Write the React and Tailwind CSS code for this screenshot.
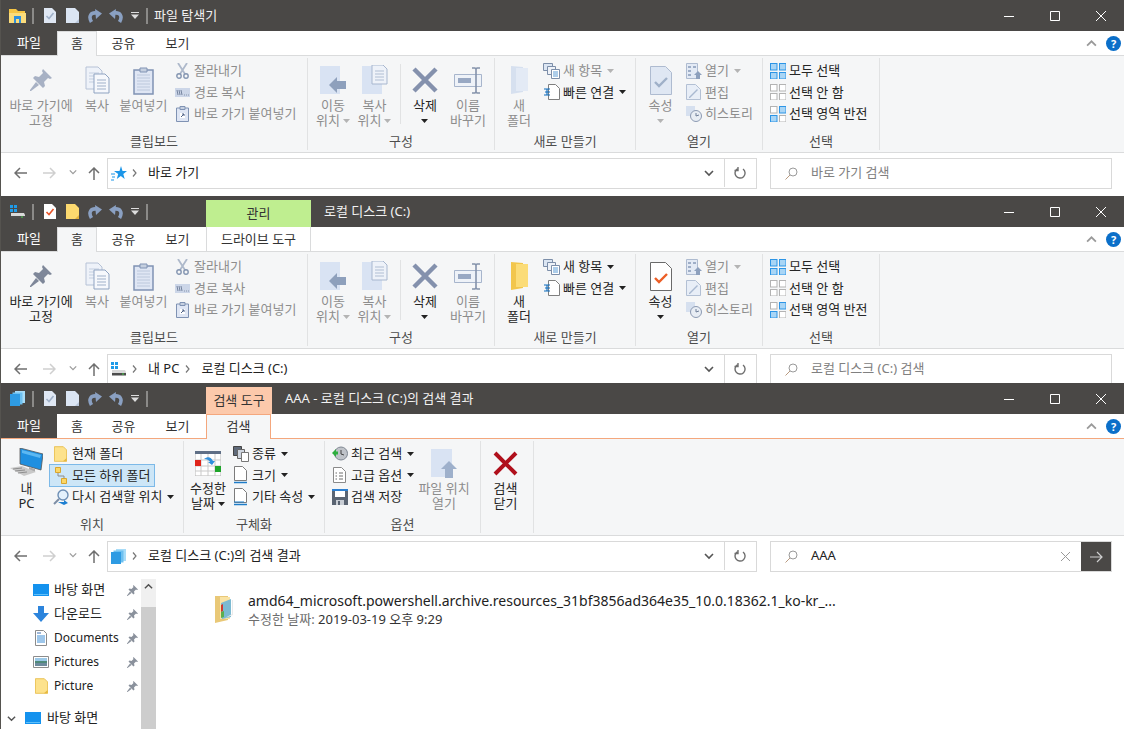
import React from 'react';

const DARK = 'bg-[#4a4846]';

/* ---------- small glyph icons ---------- */
const Caret = ({ dim }) => (
  <svg width="7" height="4" viewBox="0 0 7 4" className="shrink-0">
    <path d="M0 0h7L3.5 4z" fill={dim ? '#b4b4b4' : '#222'} />
  </svg>
);

const Chevron = ({ up, size = 9, color = '#6d6d6d' }) => (
  <svg width={size} height={size} viewBox="0 0 10 10" className="shrink-0">
    <path d={up ? 'M1 7l4-4 4 4' : 'M1 3l4 4 4-4'} fill="none" stroke={color} strokeWidth="1.6" />
  </svg>
);

const Sep = () => <div className="w-[2px] h-[16px] border-x border-[#8b8a88] bg-[#5a5856]" />;

/* ---------- quick access toolbar ---------- */
const QatCheck = ({ on }) => (
  <svg width="12" height="15" viewBox="0 0 12 15">
    <path d="M0 0h8l4 4v11H0z" fill={on ? '#fff' : '#dfe7f3'} />
    <path d="M2.5 8l2.5 2.5L9.5 5" fill="none" stroke={on ? '#e8562a' : '#9fb0c8'} strokeWidth="1.6" />
  </svg>
);
const QatPage = ({ on }) => (
  <svg width="13" height="15" viewBox="0 0 13 15">
    <path d="M0 0h9l4 4v11H0z" fill={on ? '#fcd96f' : '#dbe5f3'} />
    <path d="M9 15l4-4v4z" fill={on ? '#e3b23c' : '#b8c6da'} />
  </svg>
);
const QatUndo = ({ flip }) => (
  <svg width="14" height="14" viewBox="0 0 14 14" className={flip ? '-scale-x-100' : ''}>
    <path d="M3.500 13C0 7 3 3 9 4" fill="none" stroke="#8aa0c2" strokeWidth="3.600" />
    <path d="M7 0l7 4.500L8 10z" fill="#8aa0c2" />
  </svg>
);
const QatMore = () => (
  <svg width="8" height="7" viewBox="0 0 8 7">
    <path d="M0 0h8v1H0z" fill="#ddd" />
    <path d="M0 2.5h8L4 7z" fill="#ddd" />
  </svg>
);

/* ---------- app icons ---------- */
const ExplorerIcon = () => (
  <svg width="17" height="14" viewBox="0 0 17 14">
    <path d="M0 0h7l2 2h7v12H0z" fill="#f6c544" />
    <path d="M0 4h17v10H0z" fill="#fbdc7b" />
    <path d="M5 7h7v7H5z" fill="#2f8fdc" />
    <path d="M7 10h3v4H7z" fill="#fbdc7b" />
  </svg>
);
const DriveIcon = ({ w = 16 }) => (
  <svg width={w} height="14" viewBox="0 0 16 14">
    <path d="M0 0h3v3H0zM4 0h3v3H4zM0 4h3v3H0zM4 4h3v3H4z" fill="#1e9be8" />
    <path d="M1 8h13l1 2v3H1z" fill="#d9d9d9" />
    <path d="M1 11h14v2.500H1z" fill="#4d4d4d" />
    <path d="M11 11.500h2v1h-2z" fill="#49d14b" />
  </svg>
);
const SearchAppIcon = ({ w = 15 }) => (
  <svg width={w} height="15" viewBox="0 0 15 15">
    <path d="M5 0h10v12H5z" fill="#a7dcf8" />
    <path d="M2.500 1.500h10v12h-10z" fill="#6dc0f0" />
    <path d="M0 3h10v12H0z" fill="#2e9be3" />
  </svg>
);
const StarIcon = () => (
  <svg width="16" height="15" viewBox="0 0 16 15">
    <path d="M10 0l1.500 5H16l-3.700 3 1.400 5-3.900-3-4 3 1.400-5L3 5h5.500z" fill="#1c96e8" />
    <path d="M0 8h4M1 11h3M0 14h3" stroke="#1c96e8" strokeWidth="1.100" />
  </svg>
);

/* ---------- ribbon icons, home tab ---------- */
const PinIcon = ({ dim }) => (
  <svg width="22" height="22" viewBox="0 0 22 22">
    <g fill={dim ? '#a7b1c4' : '#7e8799'}>
      <path d="M13 0l9 9-2 1-2-1-4 4 1 4-2 2-10-10 2-2 4 1 4-4-1-2z" />
      <path d="M6 13l3 3-8 6-1 0 0-1z" />
    </g>
  </svg>
);
const Pages = ({ big }) => (
  <svg width={big ? 25 : 15} height={big ? 28 : 15} viewBox="0 0 25 28">
    <path d="M1 1h12l4 4v18H1z" fill="#eef2f9" stroke="#b6c2d6" />
    <path d="M4 7h10M4 10h10M4 13h10M4 16h10" stroke="#c4cfe0" />
    <path d="M9 8h11l4 4v15H9z" fill="#f6f8fc" stroke="#8fa3c1" />
    <path d="M12 14h9M12 17h9M12 20h9M12 23h9" stroke="#9fb0c9" />
  </svg>
);
const PasteIcon = () => (
  <svg width="21" height="29" viewBox="0 0 21 29">
    <path d="M1 4h19v24H1z" fill="#dfe6f4" stroke="#8093b4" strokeWidth="1.500" />
    <path d="M7 2h7v4H7z" fill="#c6d0e0" stroke="#8093b4" />
    <path d="M4 9h13M4 12h13M4 15h13M4 18h13M4 21h13M4 24h13" stroke="#bcc8dc" />
  </svg>
);
const CutIcon = () => (
  <svg width="13" height="16" viewBox="0 0 13 16">
    <path d="M2 0l7 11M11 0L4 11" stroke="#aeb9cb" strokeWidth="1.800" fill="none" />
    <circle cx="3" cy="13" r="2.200" fill="none" stroke="#8495b1" strokeWidth="1.400" />
    <circle cx="10" cy="13" r="2.200" fill="none" stroke="#8495b1" strokeWidth="1.400" />
  </svg>
);
const PathIcon = () => (
  <svg width="15" height="9" viewBox="0 0 15 9">
    <path d="M0 0h15v9H0z" fill="#ccd6e8" />
    <path d="M2 2l1 5M4 2l1 5M6 2l1 5M9 7h.8M11 7h.8M13 7h.8" stroke="#5e6f8c" strokeWidth=".8" />
  </svg>
);
const PasteLinkIcon = () => (
  <svg width="13" height="16" viewBox="0 0 13 16">
    <path d="M.5 2h12v13.500H.5z" fill="#dfe6f4" stroke="#7f92b3" />
    <path d="M4 .5h5v3H4z" fill="#c6d0e0" stroke="#7f92b3" />
    <path d="M4 7h5v5H4z" fill="#fff" />
    <path d="M5 11l3-3M6 8h2v2" stroke="#4e6288" fill="none" />
  </svg>
);
const MoveIcon = ({ copy }) => (
  <svg width="26" height="30" viewBox="0 0 26 30">
    <path d="M0 1h20v28H0z" fill="#d9e3f3" />
    {copy ? (
      <g>
        <path d="M10 0h11l4 4v15H10z" fill="#eef2f9" stroke="#a8b7cf" />
        <path d="M13 6h9M13 9h9M13 12h9M13 15h9" stroke="#b0bed3" />
      </g>
    ) : (
      <path d="M9 20l8-8v4h9v8h-9v4z" fill="#8ea0bc" />
    )}
  </svg>
);
const DeleteIcon = () => (
  <svg width="26" height="26" viewBox="0 0 26 26">
    <path d="M2 2l22 22M24 2L2 24" stroke="#8491ad" strokeWidth="4.500" />
  </svg>
);
const RenameIcon = () => (
  <svg width="29" height="27" viewBox="0 0 29 27">
    <path d="M.5 7.500h27v12H.5z" fill="#eef2f8" stroke="#a7b5cc" />
    <path d="M4 11h13v5H4z" fill="#98a8c3" />
    <path d="M18 1h3l1 1 1-1h3M18 26h3l1-1 1 1h3M22 2v23" stroke="#8492ab" strokeWidth="1.600" fill="none" />
  </svg>
);
const NewFolderIcon = ({ dim }) => (
  <svg width="19" height="28" viewBox="0 0 19 28">
    <path d="M1 0l12 1v25L1 28z" fill={dim ? '#d6e0ef' : '#f2c64d'} />
    <path d="M6 2h12v23H6z" fill={dim ? '#e3eaf5' : '#fbdc78'} />
  </svg>
);
const NewItemIcon = () => (
  <svg width="17" height="16" viewBox="0 0 17 16">
    <path d="M.5.500h9v7h-9z" fill="#dce6f3" stroke="#7c8ea9" />
    <path d="M4.500 3.500h8v8h-8z" fill="#eef2f8" stroke="#7c8ea9" />
    <path d="M8.500 6.500h8v9h-8z" fill="#fff" stroke="#7c8ea9" />
    <path d="M10 9h5M10 11h5M10 13h5" stroke="#5a9bd5" />
  </svg>
);
const QuickIcon = () => (
  <svg width="16" height="16" viewBox="0 0 16 16">
    <path d="M4.500.500h7l4 4v11h-11z" fill="#fff" stroke="#7f7f7f" />
    <path d="M0 5h6M1 8h5M0 11h6M3 5v6" stroke="#0f6cbd" strokeWidth="1.100" fill="none" />
  </svg>
);
const PropsIcon = ({ dim }) => (
  <svg width="22" height="29" viewBox="0 0 22 29">
    <path d="M.5.500h15l6 6v22H.5z" fill={dim ? '#dfe7f3' : '#fff'} stroke={dim ? '#aebbd0' : '#6a6a6a'} />
    <path d="M5 16l4 4 8-8" fill="none" stroke={dim ? '#9fb0c8' : '#ec5e26'} strokeWidth="2.400" />
  </svg>
);
const OpenIcon = () => (
  <svg width="16" height="16" viewBox="0 0 16 16">
    <path d="M.5.500h11v15H.5z" fill="#e3eaf5" stroke="#aebbd0" />
    <path d="M2 3h3v2H2zM2 7h3v2H2zM2 11h3v2H2zM7 3h3v2H7z" fill="#9eaec7" />
    <path d="M8 12l4-4 4 4h-2v4h-4v-4z" fill="#8da0bd" />
  </svg>
);
const EditIcon = () => (
  <svg width="15" height="16" viewBox="0 0 15 16">
    <path d="M.5.500h9l5 5v10H.5z" fill="#e8eef7" stroke="#b3c0d4" />
    <path d="M3 13l8-8 1 1-8 8H3z" fill="#a9b9d1" />
  </svg>
);
const ClockIcon = ({ w = 16 }) => (
  <svg width={w} height="16" viewBox="0 0 16 16">
    <path d="M0 0h9v10H0z" fill="#d6e0ef" />
    <circle cx="10" cy="10" r="5.500" fill="#e8edf4" stroke="#8c9ab2" />
    <path d="M10 7v3l3-1" stroke="#6f7f99" fill="none" />
  </svg>
);
const SelIcon = ({ on }) => {
  const cells = [[0, 0], [9, 0], [0, 9], [9, 9]];
  return (
    <svg width="16" height="16" viewBox="0 0 16 16">
      {cells.map(([x, y], i) => (
        <rect key={i} x={x + 0.5} y={y + 0.5} width="6.500" height="6.500"
          fill={on[i] ? '#a9d5f5' : '#fff'} stroke={on[i] ? '#2d95e6' : '#b3b3b3'} />
      ))}
    </svg>
  );
};

/* ---------- ribbon icons, search tab ---------- */
const PcIcon = () => (
  <svg width="33" height="30" viewBox="0 0 33 30">
    <path d="M10 0l23 6-2 16-21-6z" fill="#1e8fe0" stroke="#555" strokeWidth=".8" />
    <path d="M12 2l19 5-1 3-18-5z" fill="#5cb8f2" />
    <path d="M19 19l6 2v3l-6-2z" fill="#aaa" />
    <path d="M0 20l12-2 14 6-12 4z" fill="#c9c9c9" />
    <path d="M3 21l9-1M5 23l10-1M8 25l9-1" stroke="#8e8e8e" />
  </svg>
);
const FolderFlat = ({ w = 16, h = 19 }) => (
  <svg width={w} height={h} viewBox="0 0 16 19">
    <path d="M.5.500h11l4 4v14H.5z" fill="#fde28c" stroke="#e6b93f" />
    <path d="M11 18.500l4.500-4v4z" fill="#e6b93f" />
  </svg>
);
const SubFoldersIcon = () => (
  <svg width="12" height="17" viewBox="0 0 12 17">
    <path d="M.5.500h5v5h-5zM6.500 11.500h5v5h-5z" fill="#fbd666" stroke="#d9a62e" />
    <path d="M3 6v3h6v2" fill="none" stroke="#8b8b8b" />
  </svg>
);
const ResearchIcon = () => (
  <svg width="16" height="16" viewBox="0 0 16 16">
    <circle cx="10" cy="6" r="5" fill="#e4f1fc" stroke="#6e8fb5" strokeWidth="1.400" />
    <path d="M6 10l-5 5" stroke="#7d8ea6" strokeWidth="2" />
    <path d="M5 13h6v-2l4 3-4 2z" fill="#1d7fd1" />
  </svg>
);
const CalendarIcon = () => (
  <svg width="26" height="25" viewBox="0 0 26 25">
    <path d="M0 0h26v25H0z" fill="#fff" stroke="#b5b5b5" />
    <path d="M0 0h26v3H0z" fill="#5f6f86" />
    <path d="M0 9h26M0 15h26M0 20h26M6 3v22M13 3v22M20 3v22" stroke="#c9c9c9" />
    <path d="M0 9h6v6H0z" fill="#e0251c" />
    <path d="M20 15h6v6h-6z" fill="#1ea52a" />
    <path d="M9 8c4-3 7-2 9 2h2l-3 4-4-3h2c-1-2-3-3-6-3z" fill="#2f8fdc" />
  </svg>
);
const KindIcon = () => (
  <svg width="16" height="16" viewBox="0 0 16 16">
    <path d="M.5.500h8v9h-8z" fill="#5f6a7a" stroke="#444" />
    <path d="M4.500 3.500h7v9h-7z" fill="#cfd6e0" stroke="#666" />
    <path d="M8.500 6.500h7v9h-7z" fill="#fff" stroke="#777" />
  </svg>
);
const SizeIcon = ({ lines }) => (
  <svg width="13" height="18" viewBox="0 0 13 18">
    <path d="M.5.500h8l4 4v10H.5z" fill="#fff" stroke="#7c7c7c" />
    <path d="M0 16.500h13" stroke="#1e7cc8" strokeWidth="1.500" />
    {lines && <path d="M0 14h10" stroke="#1e7cc8" />}
  </svg>
);
const RecentIcon = () => (
  <svg width="16" height="15" viewBox="0 0 16 15">
    <circle cx="9" cy="7.500" r="6.500" fill="#bfc3c9" stroke="#7f8792" />
    <path d="M9 4v4l3 1" stroke="#444" fill="none" />
    <path d="M0 7l4-4v2.500h2v3H4V11z" fill="#2eae3f" />
  </svg>
);
const AdvancedIcon = () => (
  <svg width="13" height="16" viewBox="0 0 13 16">
    <path d="M.5.500h8l4 4v11H.5z" fill="#fff" stroke="#8a8a8a" />
    <path d="M2.500 6h1.500M2.500 9h1.500M2.500 12h1.500M6 6h4M6 9h4M6 12h4" stroke="#6d6d6d" />
  </svg>
);
const SaveIcon = () => (
  <svg width="16" height="16" viewBox="0 0 16 16">
    <path d="M0 0h16v16H0z" fill="#5a6472" />
    <path d="M0 0h16v2H0z" fill="#2c7fd0" />
    <path d="M3 2h10v6H3z" fill="#fff" />
    <path d="M4 11h8v5H4z" fill="#c9ced5" />
    <path d="M6 12h2v4H6z" fill="#5a6472" />
  </svg>
);
const OpenLocationIcon = () => (
  <svg width="26" height="29" viewBox="0 0 26 29">
    <path d="M0 0h21v28H0z" fill="#d9e3f3" />
    <path d="M10 20l8-8 8 8h-4v9h-8v-9z" fill="#9eb0cb" />
  </svg>
);
const CloseSearchIcon = () => (
  <svg width="25" height="25" viewBox="0 0 25 25">
    <path d="M2 2l21 21M23 2L2 23" stroke="#b0101c" strokeWidth="4" />
  </svg>
);

/* ---------- nav pane icons ---------- */
const DesktopIcon = () => (
  <svg width="16" height="12" viewBox="0 0 16 12">
    <path d="M0 0h16v12H0z" fill="#1492ee" />
    <path d="M1 10.500h14" stroke="#5fc0fa" />
  </svg>
);
const DownloadIcon = () => (
  <svg width="16" height="16" viewBox="0 0 16 16">
    <path d="M5 0h6v7h5l-8 9-8-9h5z" fill="#2c84dc" />
  </svg>
);
const DocsIcon = () => (
  <svg width="12" height="16" viewBox="0 0 12 16">
    <path d="M.5.500h8l3 3v12H.5z" fill="#fff" stroke="#8c8c8c" />
    <path d="M2 6h8M2 8h8M2 10h8M2 12h8" stroke="#3d8ed6" />
    <path d="M2 3h4" stroke="#3d6fb0" />
  </svg>
);
const PicturesIcon = () => (
  <svg width="16" height="12" viewBox="0 0 16 12">
    <path d="M.5.500h15v11H.5z" fill="#fff" stroke="#8c8c8c" />
    <path d="M2 2h12v3H2z" fill="#9cc9e8" />
    <path d="M2 5h12v2H2z" fill="#4f8a7a" />
    <path d="M2 7h12v3H2z" fill="#6d8a9c" />
  </svg>
);
const SmallPin = () => (
  <svg width="11" height="11" viewBox="0 0 22 22">
    <path d="M13 0l9 9-2 1-2-1-4 4 1 4-2 2-10-10 2-2 4 1 4-4-1-2zM6 13l3 3-8 6-1 0 0-1z" fill="#8a919c" />
  </svg>
);
const ArchiveFolderIcon = () => (
  <svg width="20" height="28" viewBox="0 0 20 28">
    <path d="M1 1l13 0v24L1 28z" fill="#e9c877" />
    <path d="M6 2h10v22H6z" fill="#fae3a3" />
    <path d="M7 8l10-4v18L8 24z" fill="#7cbad2" />
    <path d="M7 10l2-1v7l-2 1z" fill="#cf3a2f" />
    <path d="M7 17l3-1v6l-3 1z" fill="#5cae4f" />
    <path d="M11 23l8-3V5l-1 0v14z" fill="#eaeaea" />
  </svg>
);

/* ---------- ribbon building blocks ---------- */
function LargeButton({ className, icon, lines, caret, dim }) {
  return (
    <div className={`flex flex-col items-center pt-[6px] shrink-0 ${className}`}>
      <div className="h-[36px] flex items-center justify-center">{icon}</div>
      <div className={`flex flex-col items-center text-[13px] leading-[15px] whitespace-nowrap ${dim ? 'text-[#8d8d8d]' : 'text-[#262626]'}`}>
        {lines.map((line, i) => (
          <span key={i} className="h-[15px] flex items-center gap-[3px]">
            {line}
            {caret === true && i === lines.length - 1 && <Caret dim={dim} />}
          </span>
        ))}
        {caret === 'below' && <span className="h-[15px] flex items-center"><Caret dim={dim} /></span>}
      </div>
    </div>
  );
}

function SmallRow({ icon, label, caret, dim, selected }) {
  return (
    <div className={`h-[21.5px] flex items-center whitespace-nowrap text-[13px] ${dim ? 'text-[#8d8d8d]' : 'text-[#262626]'} ${selected ? '-ml-[2px] pl-[2px] pr-[3px] self-start bg-[#cde6f7] outline outline-[#7cb9e8]' : ''}`}>
      <div className="w-[17px] flex justify-center shrink-0">{icon}</div>
      <span className="ml-[3px]">{label}</span>
      {caret && <span className="ml-[5px]"><Caret dim={dim} /></span>}
    </div>
  );
}

const SmallCol = ({ className = '', children }) => (
  <div className={`flex flex-col pt-[4px] shrink-0 ${className}`}>{children}</div>
);

function Group({ className, label, children }) {
  return (
    <div className={`flex flex-col my-[2px] border-r border-[#e1e2e3] shrink-0 ${className}`}>
      <div className="h-[73px] -mt-[2px] flex">{children}</div>
      <div className="mt-[4px] h-[16px] leading-[16px] text-center text-[13px] text-[#4d4d4d]">{label}</div>
    </div>
  );
}

const Ribbon = ({ children }) => (
  <div className="h-[97px] flex bg-[#f5f6f7] border-b border-[#dadbdc] shrink-0">{children}</div>
);

function HomeRibbon({ active }) {
  return (
    <Ribbon>
      <Group className="w-[307px]" label="클립보드">
        <LargeButton className="w-[80px]" icon={<PinIcon dim={!active} />} lines={['바로 가기에', '고정']} dim={!active} />
        <LargeButton className="w-[32px]" icon={<Pages big />} lines={['복사']} dim />
        <LargeButton className="w-[61px]" icon={<PasteIcon />} lines={['붙여넣기']} dim />
        <SmallCol>
          <SmallRow icon={<CutIcon />} label="잘라내기" dim />
          <SmallRow icon={<PathIcon />} label="경로 복사" dim />
          <SmallRow icon={<PasteLinkIcon />} label="바로 가기 붙여넣기" dim />
        </SmallCol>
      </Group>
      <Group className="w-[187px]" label="구성">
        <LargeButton className="w-[50px]" icon={<MoveIcon />} lines={['이동', '위치']} caret dim />
        <LargeButton className="w-[33px]" icon={<MoveIcon copy />} lines={['복사', '위치']} caret dim />
        <div className="w-px h-[60px] mt-[8px] bg-[#e1e2e3] ml-[9px] shrink-0" />
        <LargeButton className="w-[48px]" icon={<DeleteIcon />} lines={['삭제']} caret="below" />
        <LargeButton className="w-[38px]" icon={<RenameIcon />} lines={['이름', '바꾸기']} dim />
      </Group>
      <Group className="w-[141px]" label="새로 만들기">
        <LargeButton className="w-[48px]" icon={<NewFolderIcon dim={!active} />} lines={['새', '폴더']} dim={!active} />
        <SmallCol>
          <SmallRow icon={<NewItemIcon />} label="새 항목" caret dim={!active} />
          <SmallRow icon={<QuickIcon />} label="빠른 연결" caret />
        </SmallCol>
      </Group>
      <Group className="w-[127px]" label="열기">
        <LargeButton className="w-[49px]" icon={<PropsIcon dim={!active} />} lines={['속성']} caret="below" dim={!active} />
        <SmallCol>
          <SmallRow icon={<OpenIcon />} label="열기" caret dim />
          <SmallRow icon={<EditIcon />} label="편집" dim />
          <SmallRow icon={<ClockIcon />} label="히스토리" dim />
        </SmallCol>
      </Group>
      <Group className="w-[117px]" label="선택">
        <SmallCol className="ml-[6px]">
          <SmallRow icon={<SelIcon on={[1, 1, 1, 1]} />} label="모두 선택" />
          <SmallRow icon={<SelIcon on={[0, 0, 0, 0]} />} label="선택 안 함" />
          <SmallRow icon={<SelIcon on={[0, 1, 1, 0]} />} label="선택 영역 반전" />
        </SmallCol>
      </Group>
    </Ribbon>
  );
}

function SearchRibbon() {
  return (
    <Ribbon>
      <Group className="w-[183px]" label="위치">
        <LargeButton className="w-[51px]" icon={<PcIcon />} lines={['내', 'PC']} />
        <SmallCol>
          <SmallRow icon={<FolderFlat w={13} h={16} />} label="현재 폴더" />
          <SmallRow icon={<SubFoldersIcon />} label="모든 하위 폴더" selected />
          <SmallRow icon={<ResearchIcon />} label="다시 검색할 위치" caret />
        </SmallCol>
      </Group>
      <Group className="w-[141px]" label="구체화">
        <LargeButton className="w-[48px]" icon={<CalendarIcon />} lines={['수정한', '날짜']} caret />
        <SmallCol>
          <SmallRow icon={<KindIcon />} label="종류" caret />
          <SmallRow icon={<SizeIcon />} label="크기" caret />
          <SmallRow icon={<SizeIcon lines />} label="기타 속성" caret />
        </SmallCol>
      </Group>
      <Group className="w-[156px]" label="옵션">
        <SmallCol className="w-[93px] pl-[6px]">
          <SmallRow icon={<RecentIcon />} label="최근 검색" caret />
          <SmallRow icon={<AdvancedIcon />} label="고급 옵션" caret />
          <SmallRow icon={<SaveIcon />} label="검색 저장" />
        </SmallCol>
        <LargeButton className="w-[52px]" icon={<OpenLocationIcon />} lines={['파일 위치', '열기']} dim />
      </Group>
      <Group className="w-[53px]" label="">
        <LargeButton className="w-[49px]" icon={<CloseSearchIcon />} lines={['검색', '닫기']} />
      </Group>
    </Ribbon>
  );
}

/* ---------- window chrome ---------- */
function WindowButtons() {
  return (
    <div className="ml-auto flex h-full text-white">
      <div className="w-[46px] flex items-center justify-center">
        <svg width="10" height="10" viewBox="0 0 10 10"><path d="M0 5.500h10" stroke="#fff" /></svg>
      </div>
      <div className="w-[46px] flex items-center justify-center">
        <svg width="10" height="10" viewBox="0 0 10 10"><path d="M.5.500h9v9h-9z" fill="none" stroke="#fff" /></svg>
      </div>
      <div className="w-[46px] flex items-center justify-center">
        <svg width="10" height="10" viewBox="0 0 10 10"><path d="M0 0l10 10M10 0L0 10" stroke="#fff" /></svg>
      </div>
    </div>
  );
}

function TitleBar({ appIcon, qatOn, contextTab, title }) {
  return (
    <div className={`h-[31px] flex shrink-0 ${DARK}`}>
      <div className="w-[31px] pl-[8px] flex items-center shrink-0"><div className="w-[17px] flex justify-center shrink-0">{appIcon}</div></div>
      <div className="flex items-center shrink-0">
        <Sep />
        <div className="ml-[10px]"><QatCheck on={qatOn} /></div>
        <div className="ml-[10px]"><QatPage on={qatOn} /></div>
        <div className="ml-[9px]"><QatUndo /></div>
        <div className="ml-[7px]"><QatUndo flip /></div>
        <div className="ml-[8px]"><QatMore /></div>
        <div className="ml-[7px]"><Sep /></div>
      </div>
      {contextTab ? (
        <div className={`ml-[58px] mt-[4px] flex items-center justify-center text-[13px] text-[#333] shrink-0 ${contextTab.className}`}>{contextTab.label}</div>
      ) : null}
      <div className={`flex items-center text-[13px] text-[#f2f2f2] whitespace-nowrap ${contextTab ? 'ml-[13px]' : 'ml-[6px]'}`}>{title}</div>
      <WindowButtons />
    </div>
  );
}

function TabRow({ tabs, active, accent, borderColor }) {
  return (
    <div className={`h-[25px] flex bg-white border-b shrink-0 ${borderColor}`}>
      <div className={`w-[56px] h-[24px] flex items-center justify-center text-[13px] text-white ${DARK}`}>파일</div>
      {tabs.map((tab) => {
        const isActive = tab.label === active;
        return (
          <div key={tab.label} className={`h-[25px] flex items-center justify-center text-[13px] text-[#333] shrink-0 ${tab.className} ${isActive ? `border-x border-t ${accent} bg-[#f5f6f7] z-10` : ''} ${tab.extra || ''}`}>
            {tab.label}
          </div>
        );
      })}
      <div className="ml-auto flex items-center pr-[3px]">
        <Chevron up size={11} color="#9a9a9a" />
        <div className="ml-[9px] w-[15px] h-[15px] rounded-full bg-[#0b6fc9] flex items-center justify-center text-[11px] font-bold text-white leading-none">?</div>
      </div>
    </div>
  );
}

function AddressRow({ icon, crumbs, search, searchActive }) {
  return (
    <div className="flex items-start pt-[5px] shrink-0 h-[40px] bg-white">
      <div className="w-[38px] flex justify-center pt-[9px]">
        <svg width="13" height="12" viewBox="0 0 13 12"><path d="M6 1L1 6l5 5M1 6h12" fill="none" stroke="#6f6f6f" strokeWidth="1.500" /></svg>
      </div>
      <div className="w-[20px] flex justify-center pt-[9px]">
        <svg width="13" height="12" viewBox="0 0 13 12"><path d="M7 1l5 5-5 5M12 6H0" fill="none" stroke="#cfcfcf" strokeWidth="1.500" /></svg>
      </div>
      <div className="w-[28px] flex justify-center pt-[10px]"><Chevron size={8} color="#9c9c9c" /></div>
      <div className="w-[14px] flex justify-center pt-[9px]">
        <svg width="12" height="13" viewBox="0 0 12 13"><path d="M1 6l5-5 5 5M6 1v12" fill="none" stroke="#6f6f6f" strokeWidth="1.500" /></svg>
      </div>
      <div className="ml-[6px] w-[650px] h-[31px] border border-[#d9d9d9] flex items-center pb-[1px] text-[13px] text-[#222] shrink-0">
        <div className="w-[21px] pl-[3px] shrink-0">{icon}</div>
        {crumbs.map((crumb) => (
          <React.Fragment key={crumb}>
            <span className="w-[10px] mr-[9px] flex justify-center shrink-0">
              <svg width="5" height="8" viewBox="0 0 5 8"><path d="M1 .5L4 4 1 7.500" fill="none" stroke="#777" strokeWidth="1.200" /></svg>
            </span>
            <span className="mr-[3px] whitespace-nowrap">{crumb}</span>
          </React.Fragment>
        ))}
        <div className="ml-auto w-[31px] flex justify-center"><Chevron size={10} color="#555" /></div>
        <div className="w-[32px] h-full border-l border-[#d9d9d9] flex items-center justify-center">
          <svg width="13" height="13" viewBox="0 0 13 13"><path d="M4 1.500a5 5 0 1 0 5 .5M4 0v3.500H.5" fill="none" stroke="#6f6f6f" strokeWidth="1.400" /></svg>
        </div>
      </div>
      <div className={`ml-[13px] w-[342px] h-[31px] border border-[#d9d9d9] flex items-center text-[13px] shrink-0 ${searchActive ? 'text-[#222]' : 'text-[#808080]'}`}>
        <div className="pl-[14px] w-[40px] shrink-0">
          <svg width="13" height="13" viewBox="0 0 13 13"><circle cx="8" cy="5" r="4" fill="none" stroke="#9a9a9a" /><path d="M5 8l-4.500 4.500" stroke="#b89a80" /></svg>
        </div>
        <span className="whitespace-nowrap pb-[1px]">{search}</span>
        {searchActive && (
          <div className="ml-auto flex h-full items-center">
            <svg width="11" height="11" viewBox="0 0 11 11"><path d="M1 1l9 9M10 1l-9 9" stroke="#999" /></svg>
            <div className={`ml-[10px] w-[30px] h-full flex items-center justify-center ${DARK}`}>
              <svg width="13" height="12" viewBox="0 0 13 12"><path d="M7 1l5 5-5 5M12 6H0" fill="none" stroke="#cfcfcf" strokeWidth="1.200" /></svg>
            </div>
          </div>
        )}
      </div>
    </div>
  );
}

function NavRow({ icon, label, latin }) {
  return (
    <div className={`h-[24px] flex items-center text-[#222] whitespace-nowrap ${latin ? 'text-[12px]' : 'text-[13px]'}`}>
      <div className="w-[53px] pl-[32px] shrink-0">
        <div className="w-[16px] flex justify-center">{icon}</div>
      </div>
      <span>{label}</span>
      <span className="ml-auto pr-[3px]"><SmallPin /></span>
    </div>
  );
}

function SearchResults() {
  return (
    <div className="flex flex-1 min-h-0 bg-white">
      <div className="w-[140px] pt-[2px] shrink-0">
        <NavRow icon={<DesktopIcon />} label="바탕 화면" />
        <NavRow icon={<DownloadIcon />} label="다운로드" />
        <NavRow icon={<DocsIcon />} label="Documents" latin />
        <NavRow icon={<PicturesIcon />} label="Pictures" latin />
        <NavRow icon={<FolderFlat w={13} h={16} />} label="Picture" latin />
        <div className="mt-[8px] h-[24px] flex items-center text-[13px] text-[#222] whitespace-nowrap">
          <div className="w-[24px] flex justify-center pr-[4px] shrink-0"><Chevron size={9} color="#555" /></div>
          <DesktopIcon />
          <span className="ml-[6px]">바탕 화면</span>
        </div>
      </div>
      <div className="w-[15px] mt-[3px] flex flex-col shrink-0">
        <div className="h-[28px] bg-[#f0f0f0] flex justify-center pt-[3px]"><Chevron up size={9} color="#505050" /></div>
        <div className="flex-1 bg-[#cdcdcd]" />
      </div>
      <div className="pl-[58px] pt-[19px] flex items-start">
        <ArchiveFolderIcon />
        <div className="ml-[14px] -mt-[3px]">
          <div className="text-[14px] leading-[18px] text-[#222] whitespace-nowrap">amd64_microsoft.powershell.archive.resources_31bf3856ad364e35_10.0.18362.1_ko-kr_...</div>
          <div className="text-[13px] leading-[18px] text-[#6d6d6d] whitespace-nowrap">수정한 날짜: <span className="text-[#333]">2019-03-19 오후 9:29</span></div>
        </div>
      </div>
    </div>
  );
}

const homeTabs = [
  { label: '홈', className: 'w-[40px]' },
  { label: '공유', className: 'w-[53px]' },
  { label: '보기', className: 'w-[55px]' },
];

export default function App() {
  return (
    <div className="w-[1124px] h-[729px] overflow-hidden bg-white border-l border-[#55534f] font-['Noto_Sans','Noto_Sans_CJK_KR',sans-serif]">
      {/* 바로 가기 */}
      <div className="h-[196px] flex flex-col overflow-hidden">
        <TitleBar appIcon={<ExplorerIcon />} title="파일 탐색기" />
        <TabRow tabs={homeTabs} active="홈" accent="border-[#dadbdc]" borderColor="border-[#dadbdc]" />
        <HomeRibbon />
        <AddressRow icon={<StarIcon />} crumbs={['바로 가기']} search="바로 가기 검색" />
      </div>

      {/* 로컬 디스크 */}
      <div className="h-[187px] flex flex-col overflow-hidden">
        <TitleBar appIcon={<DriveIcon />} qatOn contextTab={{ label: '관리', className: 'w-[105px] bg-[#bfee90]' }} title="로컬 디스크 (C:)" />
        <TabRow
          tabs={[...homeTabs, { label: '드라이브 도구', className: 'ml-px w-[105px]', extra: 'border-x border-[#dadbdc]' }]}
          active="홈"
          accent="border-[#dadbdc]"
          borderColor="border-[#dadbdc]"
        />
        <HomeRibbon active />
        <AddressRow icon={<DriveIcon />} crumbs={['내 PC', '로컬 디스크 (C:)']} search="로컬 디스크 (C:) 검색" />
      </div>

      {/* 검색 결과 */}
      <div className="h-[346px] flex flex-col overflow-hidden">
        <TitleBar appIcon={<SearchAppIcon />} contextTab={{ label: '검색 도구', className: 'w-[66px] bg-[#fcc9ab]' }} title="AAA - 로컬 디스크 (C:)의 검색 결과" />
        <TabRow
          tabs={[...homeTabs, { label: '검색', className: 'ml-px w-[65px]' }]}
          active="검색"
          accent="border-[#f4a77d]"
          borderColor="border-[#f4a77d]"
        />
        <SearchRibbon />
        <AddressRow icon={<SearchAppIcon />} crumbs={['로컬 디스크 (C:)의 검색 결과']} search="AAA" searchActive />
        <SearchResults />
      </div>
    </div>
  );
}
